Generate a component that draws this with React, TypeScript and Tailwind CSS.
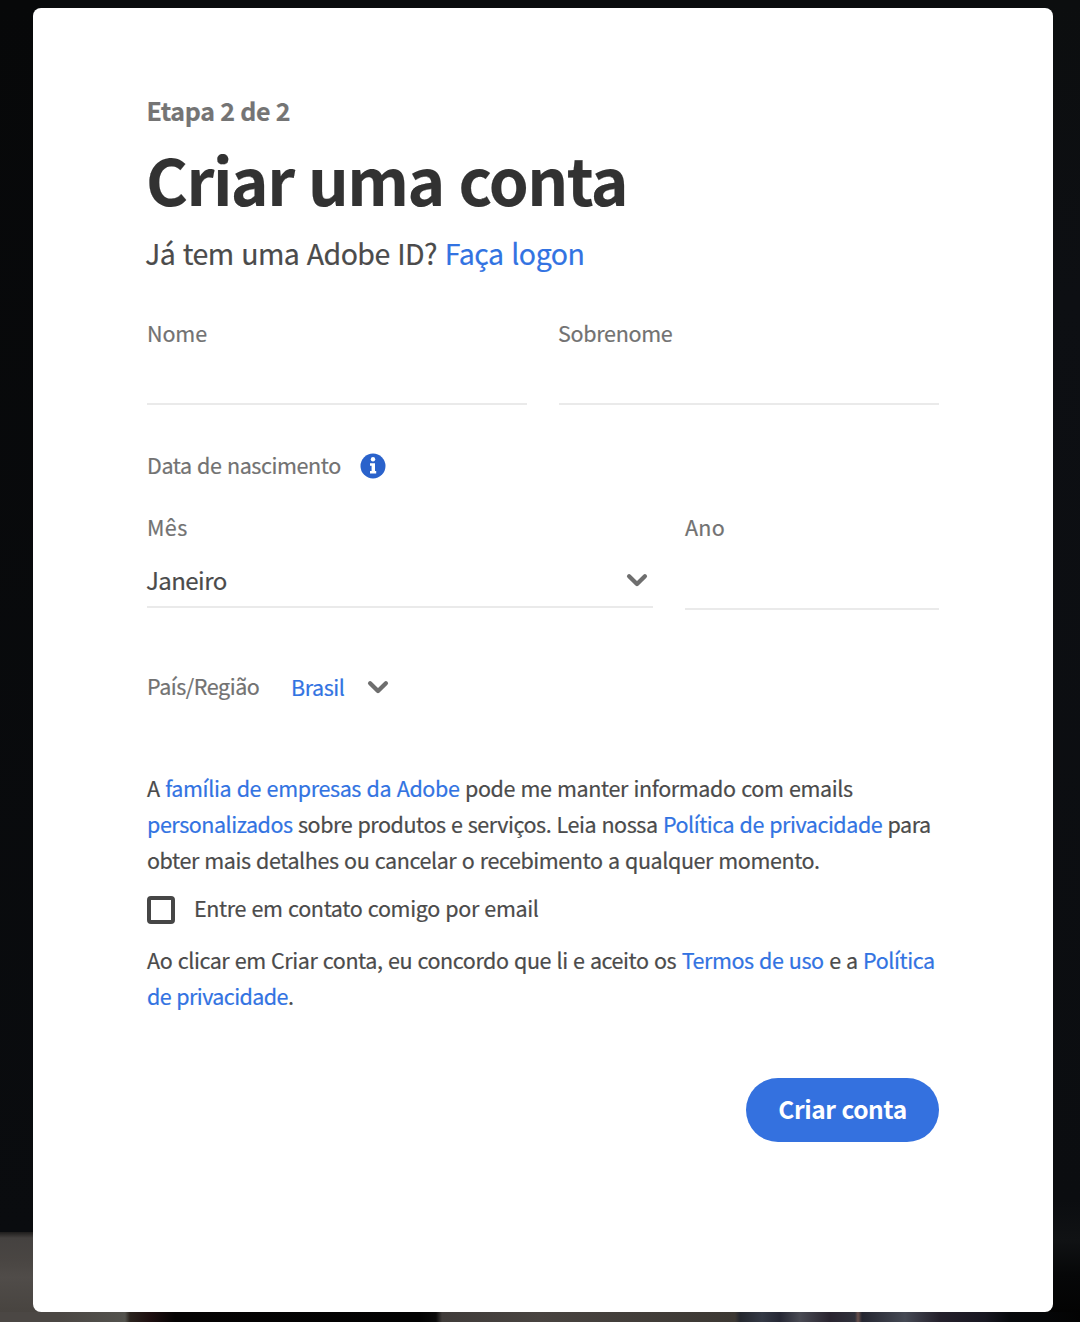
import type { ReactNode } from 'react';

function Chevron() {
  return (
    <svg width="22" height="15" viewBox="0 0 22 15" fill="none">
      <path d="M3.1 3.2 11 11 18.9 3.2" stroke="#6e6e6e" strokeWidth="4.3" strokeLinecap="round" strokeLinejoin="round" />
    </svg>
  );
}

function InfoIcon() {
  return (
    <svg width="26" height="26" viewBox="0 0 26 26">
      <circle cx="13" cy="13" r="12.5" fill="#2a62cb" />
      <circle cx="13" cy="6.3" r="2.2" fill="#fff" />
      <path d="M10 10.2h5v7.9h1.2v2.5H10v-2.5h1.6v-5.4H10z" fill="#fff" />
    </svg>
  );
}

function Label({ children, className }: { children: ReactNode; className: string }) {
  return <label className={`block text-[21.5px] leading-8 whitespace-nowrap text-[#727272] ${className}`}>{children}</label>;
}

function Link({ children }: { children: ReactNode }) {
  return <a href="#" className="text-[#3273e2]">{children}</a>;
}

function Backdrop() {
  return (
    <div className="absolute inset-0 -z-10 flex flex-col bg-[#090b0d]">
      <div className="flex h-[1312px] justify-between">
        <div className="flex w-[40px] flex-col">
          <div className="h-[1232px] bg-linear-to-b from-[#070809] to-[#0a0c0f]" />
          <div className="h-[80px] bg-[linear-gradient(#1e1d1c,#454240_6px,#4a4643_30px,#504c49_45px,#484440)]" />
        </div>
        <div className="w-[40px] bg-[linear-gradient(#0c0e0f,#0d0f13_300px,#0b0d10_1200px,#101214_1240px,#060708_1275px,#030303)]" />
      </div>
      <div className="h-[10px] bg-[linear-gradient(90deg,#4b4744_0px,#4b4744_60px,#53524d_125px,#2a231e_130px,#1e0f10_150px,#050303_175px,#020202_420px,#0a0a0a_436px,#403c3a_442px,#484340_540px,#3c3833_735px,#24272e_740px,#343945_762px,#252734_780px,#494a53_800px,#29242f_830px,#30313b_855px,#68504c_858px,#252631_862px,#454954_905px,#24202b_940px,#181721_985px,#07090c_1010px,#030303_1080px)]" />
    </div>
  );
}

export default function App() {
  return (
    <div className="relative isolate h-[1322px] w-[1080px] overflow-hidden pt-2 pl-[33px] font-['Noto_Sans_CJK_JP',sans-serif] text-[#4b4b4b] [-webkit-text-stroke:0.2px]">
      <Backdrop />
      <main className="h-[1304px] w-[1020px] rounded-lg bg-white pt-[86px] pr-[114px] pl-[114px]">
        <p className="-ml-[0.5px] text-[25px] leading-8 font-bold tracking-[-0.35px] text-[#747474] [word-spacing:0.3px]">Etapa 2 de 2</p>
        <h1 className="mt-3 -ml-px text-[64px] leading-[80px] font-bold tracking-[-1.5px] whitespace-nowrap text-[#323232] [word-spacing:1.5px]">Criar uma conta</h1>
        <p className="mt-[15px] -ml-[2px] text-[28.5px] leading-10 tracking-[-0.57px] whitespace-nowrap [word-spacing:1.8px]">
          Já tem uma Adobe ID? <span className="tracking-[-0.5px]"><Link>Faça logon</Link></span>
        </p>

        <div className="mt-11 flex gap-8">
          <div className="w-[380px]">
            <Label className="tracking-[-0.1px]">Nome</Label>
            <input aria-label="Nome" className="block h-14 w-full border-b-2 border-[#eaeaea] outline-none" />
          </div>
          <div className="w-[380px]">
            <Label className="-ml-px tracking-[-0.3px]">Sobrenome</Label>
            <input aria-label="Sobrenome" className="block h-14 w-full border-b-2 border-[#eaeaea] outline-none" />
          </div>
        </div>

        <div className="mt-11 flex h-8 items-center">
          <div className="w-[213px]"><Label className="tracking-[-0.4px] [word-spacing:1px]">Data de nascimento</Label></div>
          <div className="pt-px"><InfoIcon /></div>
        </div>

        <div className="mt-[30px] flex gap-8">
          <div className="w-[506px]">
            <Label className="tracking-[0.4px]">Mês</Label>
            <div className="mt-4 flex h-[49px] justify-between border-b-2 border-[#eaeaea] pr-[5px]">
              <span className="-ml-px pt-px text-[24px] leading-10 tracking-[-0.55px]">Janeiro</span>
              <div className="pt-[14px]"><Chevron /></div>
            </div>
          </div>
          <div className="w-[254px]">
            <Label className="tracking-[0.3px]">Ano</Label>
            <input aria-label="Ano" className="block h-[67px] w-full border-b-2 border-[#eaeaea] outline-none" />
          </div>
        </div>

        <div className="mt-[60px] flex h-8">
          <div className="w-[144px]"><Label className="tracking-[-0.45px]">País/Região</Label></div>
          <div className="w-[76px] pt-px text-[21.5px] leading-8 tracking-[-0.45px]"><Link>Brasil</Link></div>
          <div className="pt-[10px]"><Chevron /></div>
        </div>

        <div className="mt-[68px] text-[21.5px] leading-9 whitespace-nowrap [word-spacing:1px]">
          <p className="tracking-[-0.365px]">A <Link>família de empresas da Adobe</Link> pode me manter informado com emails</p>
          <p className="tracking-[-0.455px]"><Link>personalizados</Link> sobre produtos e serviços. Leia nossa <Link>Política de privacidade</Link> para</p>
          <p className="tracking-[-0.41px]">obter mais detalhes ou cancelar o recebimento a qualquer momento.</p>
        </div>

        <label className="mt-[14px] flex h-8 items-end gap-[19px]">
          <input type="checkbox" className="size-7 appearance-none rounded-[4px] border-4 border-[#464646]" />
          <span className="text-[21.5px] leading-8 tracking-[-0.36px] [word-spacing:1px]">Entre em contato comigo por email</span>
        </label>

        <div className="mt-[18px] text-[21.5px] leading-9 tracking-[-0.42px] whitespace-nowrap [word-spacing:1px]">
          <p>Ao clicar em Criar conta, eu concordo que li e aceito os <Link>Termos de uso</Link> e a <Link>Política</Link></p>
          <p className="tracking-[-0.58px]"><Link>de privacidade</Link>.</p>
        </div>

        <div className="mt-16 flex justify-end">
          <button className="h-16 w-[193px] rounded-full bg-[#3471df] pb-[2px] text-[24.5px] leading-8 font-bold tracking-[-0.45px] text-white [-webkit-text-stroke:0] [word-spacing:1px]">Criar conta</button>
        </div>
      </main>
    </div>
  );
}
